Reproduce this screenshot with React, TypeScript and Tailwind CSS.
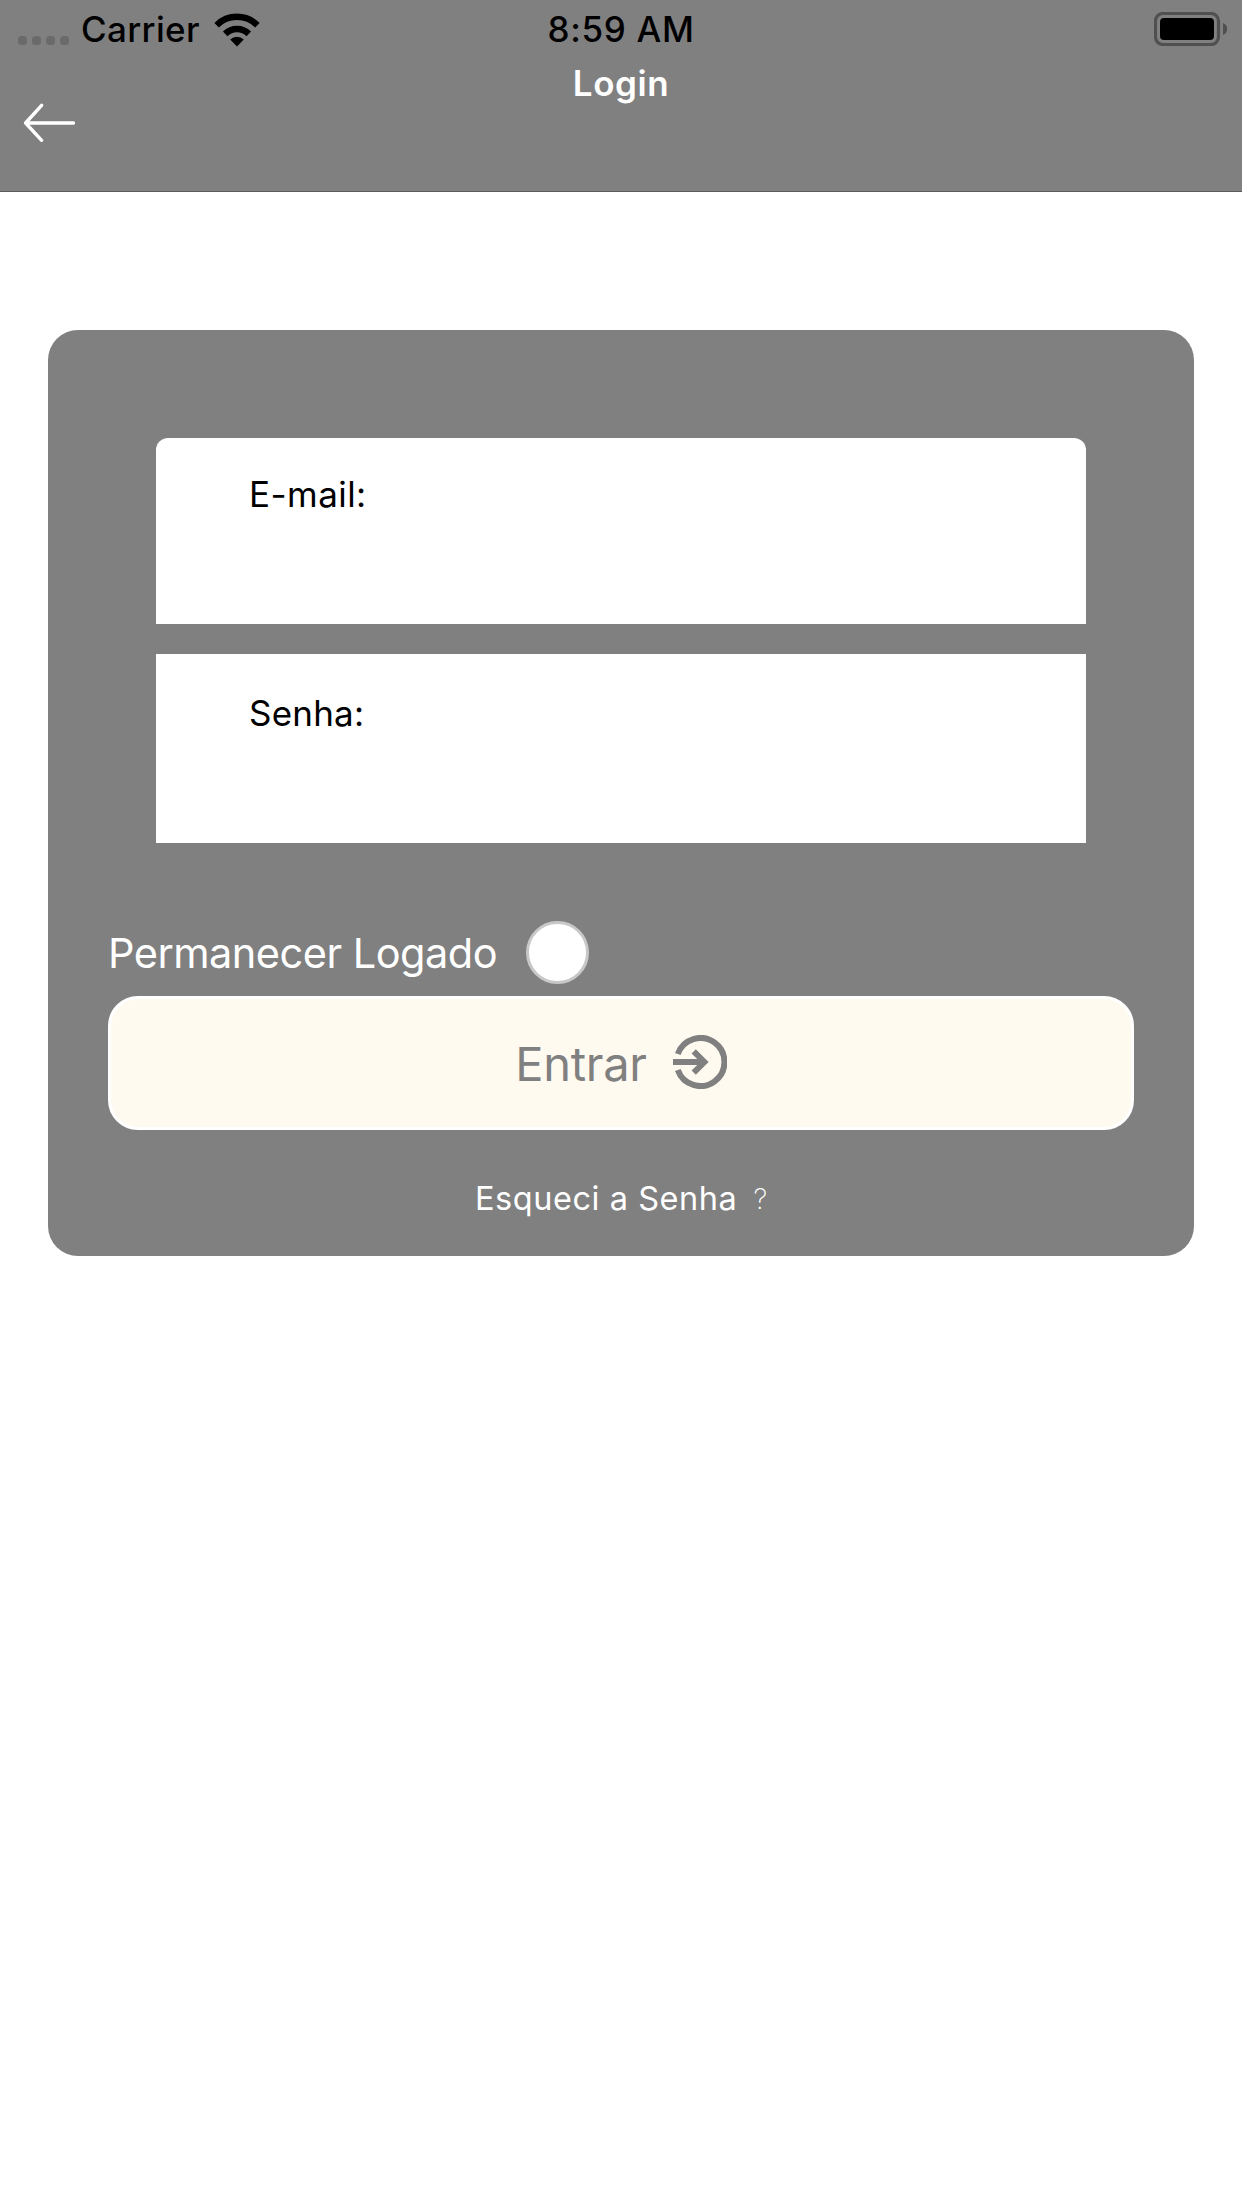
import React, { useState } from 'react';

const WifiIcon = () => (
  <svg width="46" height="34" viewBox="0 0 46 34" fill="none">
    <path d="M2.6 12.2A29 29 0 0 1 43.4 12.2" stroke="#000" strokeWidth="6.4" />
    <path d="M11.2 20.9A16.8 16.8 0 0 1 34.8 20.9" stroke="#000" strokeWidth="6.4" />
    <path d="M23 33.4L16.2 26.6A9.6 9.6 0 0 1 29.8 26.6Z" fill="#000" />
  </svg>
);

const BatteryIcon = () => (
  <svg width="74" height="34" viewBox="0 0 74 34">
    <rect x="1.5" y="1.5" width="63" height="31" rx="7.5" fill="none" stroke="#505050" strokeWidth="3.2" />
    <rect x="6" y="6" width="54" height="22" rx="4" fill="#000" />
    <path d="M69 11A6.4 6.4 0 0 1 69 23Z" fill="#505050" />
  </svg>
);

const BackIcon = () => (
  <svg width="52" height="40" viewBox="0 0 52 40" fill="none">
    <path
      d="M18.6 2.3L2.6 20L18.6 37.3M3 20H50.4"
      stroke="#fff"
      strokeWidth="3.4"
      strokeLinecap="round"
      strokeLinejoin="round"
    />
  </svg>
);

const EnterIcon = () => (
  <svg width="54" height="54" viewBox="0 0 54 54" fill="none" stroke="#808080" strokeWidth="6">
    <path d="M4.8 19A24 24 0 1 1 4.8 35" />
    <path d="M0 27H32" />
    <path d="M20.7 16.3L31.4 27L20.7 37.7" />
  </svg>
);

const StatusBar = () => (
  <div className="grid h-[58px] grid-cols-3 items-center text-[35px] leading-[58px] font-medium text-black">
    <div className="flex items-center pl-[18px]">
      <div className="mt-[23px] flex gap-[5px]">
        {[0, 1, 2, 3].map((dot) => (
          <span key={dot} className="size-[9px] rounded-[3.5px] bg-[#6a6a6a]" />
        ))}
      </div>
      <span className="ml-[12px] tracking-[0.35px]">Carrier</span>
      <span className="ml-[14px] pt-px">
        <WifiIcon />
      </span>
    </div>
    <span className="text-center tracking-[0.66px]">8:59 AM</span>
    <div className="flex justify-end pr-[14px]">
      <BatteryIcon />
    </div>
  </div>
);

const Header = () => (
  <header className="h-[192px] border-b border-[#5c5c5c] bg-[#808080]">
    <StatusBar />
    <div className="grid grid-cols-3">
      <button type="button" aria-label="Voltar" className="w-fit pt-[45px] pl-[23px]">
        <BackIcon />
      </button>
      <h1 className="text-center text-[35px] leading-[50px] font-semibold tracking-[0.54px] text-white">
        Login
      </h1>
    </div>
  </header>
);

export default function App() {
  const [email, setEmail] = useState('');
  const [password, setPassword] = useState('');
  const [keepLogged, setKeepLogged] = useState(false);

  return (
    <div className="min-h-screen w-full bg-white font-[Inter,'Noto_Sans',sans-serif]">
      <Header />

      <main className="px-12 pt-[138px]">
        <form className="h-[926px] rounded-[30px] bg-[#808080] px-[60px] pt-[108px]">
          <div className="flex flex-col gap-[30px] px-12">
            <label className="block h-[186px] rounded-t-[12px] bg-white px-[93px] pt-[24px] text-[35px] leading-[64px] text-black">
              <span className="block tracking-[0.45px]">E-mail:</span>
              <input
                type="email"
                value={email}
                onChange={(e) => setEmail(e.target.value)}
                className="block w-full outline-none"
              />
            </label>
            <label className="block h-[189px] bg-white px-[93px] pt-[27px] text-[35px] leading-[64px] text-black">
              <span className="block tracking-[0.2px]">Senha:</span>
              <input
                type="password"
                value={password}
                onChange={(e) => setPassword(e.target.value)}
                className="block w-full outline-none"
              />
            </label>
          </div>

          <div className="mt-[78px] flex h-[63px] items-center gap-[29px]">
            <span className="pt-px text-[41.5px] leading-[63px] tracking-[-0.51px] text-white">
              Permanecer Logado
            </span>
            <button
              type="button"
              role="switch"
              aria-checked={keepLogged}
              aria-label="Permanecer Logado"
              onClick={() => setKeepLogged(!keepLogged)}
              className="size-[63px] rounded-full border-[3px] border-[#c8c8c8] bg-white"
            />
          </div>

          <button
            type="button"
            className="mt-[12px] flex h-[134px] w-full items-center justify-center gap-[26px] rounded-[30px] border-[3px] border-white bg-[#fffaf0] text-[47px] tracking-[-0.3px] text-[#808080]"
          >
            <span className="pt-[2px]">Entrar</span>
            <span className="-mt-[3px]">
              <EnterIcon />
            </span>
          </button>

          <button
            type="button"
            className="mx-auto mt-[44px] flex h-[50px] items-center gap-[16px] text-white"
          >
            <span className="text-[32.5px] leading-[50px] tracking-[0.55px]">Esqueci a Senha</span>
            <span className="text-[28px] leading-[50px] font-extralight">?</span>
          </button>
        </form>
      </main>
    </div>
  );
}
